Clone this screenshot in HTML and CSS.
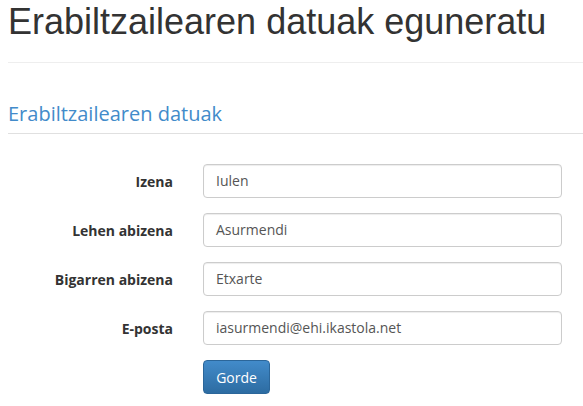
FILE: index.html
```html
<!DOCTYPE html>
<html>
<head>
<meta charset="utf-8">
<link rel="stylesheet" href="styles.css">
</head>
<body>
<div class="page">
  <h1 class="title">Erabiltzailearen datuak eguneratu</h1>
  <hr class="rule">
  <form class="form">
    <div class="legend">Erabiltzailearen datuak</div>
    <div class="rows">
      <label class="label">Izena</label>
      <div class="input">Iulen</div>
      <label class="label">Lehen abizena</label>
      <div class="input">Asurmendi</div>
      <label class="label">Bigarren abizena</label>
      <div class="input">Etxarte</div>
      <label class="label">E-posta</label>
      <div class="input">iasurmendi@ehi.ikastola.net</div>
      <div></div>
      <div><button type="button" class="btn">Gorde</button></div>
    </div>
  </form>
</div>
</body>
</html>
```
FILE: styles.css
```css
html, body { margin: 0; padding: 0; background: #fff; }
.page { padding: 0 0 0 8px; font-family: "Open Sans", sans-serif; color: #333; }
.title {
  font-family: "Liberation Sans", Arial, sans-serif;
  font-weight: 400;
  font-size: 36px;
  line-height: 40px;
  margin: 2px 0 0 0;
  color: #333;
}
.rule { border: 0; border-top: 1px solid #eee; margin: 20px 0 0 0; height: 0; }
.legend {
  margin-top: 36px;
  font-size: 20px;
  line-height: 30px;
  color: #428bca;
  padding-bottom: 4px;
  border-bottom: 1px solid #e0e0e0;
}
.rows {
  display: grid;
  grid-template-columns: 165px 359px;
  column-gap: 30px;
  row-gap: 15px;
  margin-top: 30px;
  align-items: center;
}
.label { text-align: right; font-weight: 700; font-size: 14px; color: #333; }
.input {
  box-sizing: border-box;
  height: 34px;
  border: 1px solid #ccc;
  border-radius: 4px;
  padding: 0 12px;
  font-size: 14px;
  line-height: 32px;
  color: #555;
  box-shadow: inset 0 1px 1px rgba(0,0,0,.075);
}
.btn {
  font-family: "Open Sans", sans-serif;
  height: 34px;
  width: 67px;
  border: 1px solid #2b669a;
  border-radius: 4px;
  color: #fff;
  font-size: 14px;
  background: linear-gradient(#428bca, #2d6ca2);
  padding: 0;
}
```
